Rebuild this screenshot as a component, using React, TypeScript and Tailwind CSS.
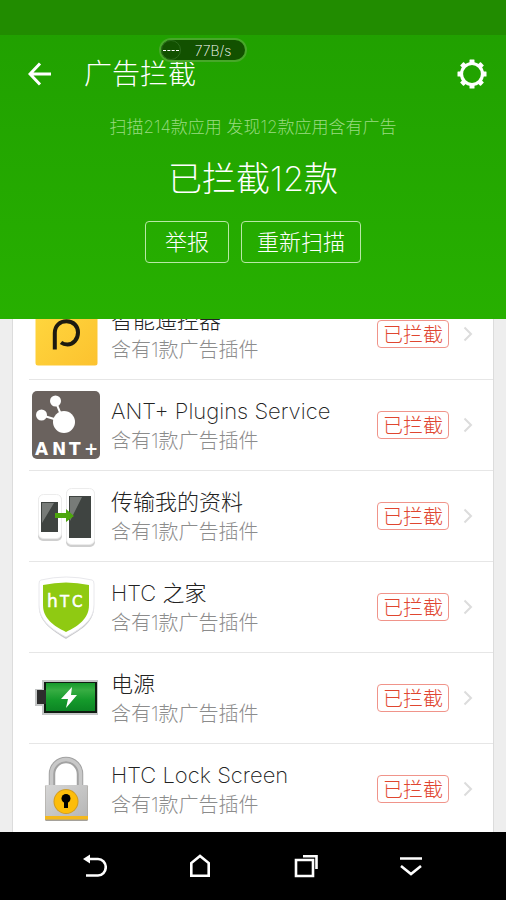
import type { ReactNode } from 'react';

function RemoteIcon() {
  return (
    <svg viewBox="0 0 68 68" className="size-17" aria-hidden="true">
      <defs>
        <linearGradient id="remote" x1="0" y1="0" x2="1" y2="1">
          <stop offset="0" stopColor="#ffd83f" />
          <stop offset="1" stopColor="#fcc22f" />
        </linearGradient>
      </defs>
      <rect x="3.500" y="3.500" width="62" height="62" rx="2.500" fill="url(#remote)" />
      <path d="M22.800 49.500V33C22.800 25.500 28 21.300 34.500 21.300C41.500 21.300 46 26 46 32.500C46 39.500 41 44.500 35.500 44.500C33 44.500 31 44 29 42.500" fill="none" stroke="#1c1a10" strokeWidth="4" />
    </svg>
  );
}

function AntIcon() {
  return (
    <svg viewBox="0 0 68 68" className="size-17" aria-hidden="true">
      <rect width="68" height="68" rx="5" fill="#6a625e" />
      <g stroke="#fff" strokeWidth="2">
        <path d="M32 31L23 9M32 31L9 24" />
      </g>
      <g fill="#fff">
        <circle cx="32" cy="31" r="11" />
        <circle cx="23.500" cy="10" r="5.500" />
        <circle cx="9.500" cy="24" r="5.500" />
      </g>
      <text y="64" fill="#fff" fontSize="17" fontWeight="700" fontFamily="DejaVu Sans, sans-serif">
        <tspan x="3">A</tspan>
        <tspan x="20">N</tspan>
        <tspan x="37">T</tspan>
        <tspan x="52">+</tspan>
      </text>
    </svg>
  );
}

function TransferIcon() {
  return (
    <svg viewBox="0 0 68 68" className="size-17" aria-hidden="true">
      <g fill="#cfcfcf">
        <rect x="6" y="14" width="24" height="45" rx="5" />
        <rect x="34" y="8" width="29" height="57" rx="5" />
      </g>
      <g fill="#fff" stroke="#ececec">
        <rect x="6.500" y="12.500" width="23" height="44" rx="5" />
        <rect x="34.500" y="6.500" width="28" height="56" rx="5" />
      </g>
      <path d="M9 20h17v30H9zM37 14h22v42H37z" fill="#3f4441" />
      <path d="M10 21h12L10 41zM38 15h12L38 39z" fill="#777b78" />
      <path d="M23 31h11v-4l8 7-8 6v-4H23z" fill="#4da60d" />
    </svg>
  );
}

function HtcHomeIcon() {
  return (
    <svg viewBox="0 0 68 68" className="size-17" aria-hidden="true">
      <path d="M9 9Q34 3 60 9Q62 9 62 13V34C62 51 46 58 34 66C21 58 7 49 7 34V13Q7 9 9 9Z" fill="#c9c9cc" />
      <path d="M9 7Q34 1 60 7Q62 7 62 11V32C62 49 46 57 34 64C21 57 7 48 7 32V11Q7 7 9 7Z" fill="#fff" stroke="#e8e8ec" />
      <path d="M11 12Q34 7 57 12V32C57 46 46 53 34 59C22 53 11 46 11 32Z" fill="#8fca12" />
      <text y="34" fill="#fff" stroke="#fff" strokeWidth="0.500" fontSize="17" fontWeight="400" fontFamily="DejaVu Sans, sans-serif">
        <tspan x="15">h</tspan>
        <tspan x="28" fontSize="15">T</tspan>
        <tspan x="40" fontSize="15">C</tspan>
      </text>
    </svg>
  );
}

function PowerIcon() {
  return (
    <svg viewBox="0 0 68 68" className="size-17" aria-hidden="true">
      <defs>
        <linearGradient id="cell" x1="0" y1="0" x2="0" y2="1">
          <stop offset="0" stopColor="#159a2b" />
          <stop offset="0.25" stopColor="#37ad43" />
          <stop offset="0.6" stopColor="#159a2b" />
          <stop offset="1" stopColor="#0c8524" />
        </linearGradient>
      </defs>
      <path d="M10 16h56v35H10v-9H3V25h7z" fill="#c4c6c6" />
      <path d="M12 18h53v31H12z" fill="#101c12" />
      <path d="M5 26h9v14H5z" fill="#2d2d2d" />
      <path d="M14 19h49v28H14z" fill="url(#cell)" />
      <path d="M40 23L29 35h7l-2 9 11-13h-6z" fill="#fff" />
    </svg>
  );
}

function LockIcon() {
  return (
    <svg viewBox="0 0 68 68" className="size-17" aria-hidden="true">
      <defs>
        <linearGradient id="steel" x1="0" y1="0" x2="1" y2="1">
          <stop offset="0" stopColor="#d6d6d6" />
          <stop offset="1" stopColor="#b5b5b5" />
        </linearGradient>
      </defs>
      <path d="M20 31V19a14 14 0 0 1 28 0v12" fill="none" stroke="#a2a2a2" strokeWidth="6.500" />
      <path d="M19.500 31V19a14.500 14.500 0 0 1 29 0v12" fill="none" stroke="#c8c8c8" strokeWidth="3.500" />
      <rect x="13" y="30" width="43" height="36" rx="1.500" fill="#a5a19a" />
      <rect x="13.500" y="30" width="42" height="34" rx="1" fill="url(#steel)" />
      <path d="M13 61h43v3.500H13z" fill="#f4b81c" />
      <circle cx="34" cy="46.500" r="12.500" fill="#d19c22" />
      <circle cx="34" cy="46.500" r="11.500" fill="#fdbd0b" />
      <circle cx="34" cy="43.500" r="4.500" />
      <path d="M32 45h4v8h-4z" />
    </svg>
  );
}

function GearIcon() {
  const teeth = [0, 45, 90, 135, 180, 225, 270, 315];
  return (
    <svg viewBox="0 0 30 30" className="size-[30px]" aria-hidden="true">
      <circle cx="15" cy="15" r="10.500" fill="none" stroke="#fff" strokeWidth="3.200" />
      {teeth.map((angle) => (
        <rect key={angle} x="12.500" y="0.500" width="5" height="4.500" rx="0.500" fill="#fff" transform={`rotate(${angle} 15 15)`} />
      ))}
    </svg>
  );
}

const apps: { name: string; icon: ReactNode }[] = [
  { name: '智能遥控器', icon: <RemoteIcon /> },
  { name: 'ANT+ Plugins Service', icon: <AntIcon /> },
  { name: '传输我的资料', icon: <TransferIcon /> },
  { name: 'HTC 之家', icon: <HtcHomeIcon /> },
  { name: '电源', icon: <PowerIcon /> },
  { name: 'HTC Lock Screen', icon: <LockIcon /> },
];

function AppRow({ name, icon }: { name: string; icon: ReactNode }) {
  return (
    <li className="ml-4 border-b border-[#e6e6e6]">
      <a href="#" className="flex h-[90px] items-center pr-5 pl-[3px]">
        {icon}
        <div className="ml-[11px] min-w-0 flex-1 pt-1 whitespace-nowrap">
          <div className="text-[22px] leading-7 text-[#222]">{name}</div>
          <div className="text-[20px] leading-8 text-[#8c8c8c]">含有1款广告插件</div>
        </div>
        <span className="flex h-7 w-[72px] items-center justify-center rounded border border-[#f0948a] pt-px text-[20px] text-[#df4630]">
          已拦截
        </span>
        <svg viewBox="0 0 10 16" className="ml-[14px] h-4 w-[10px]" fill="none" stroke="#dcdcdc" strokeWidth="2" aria-hidden="true">
          <path d="M1.500 1.500L8 8l-6.500 6.500" />
        </svg>
      </a>
    </li>
  );
}

export default function App() {
  return (
    <div className="flex h-screen flex-col overflow-hidden bg-[#eee] font-['Inter','Noto_Sans_CJK_SC',sans-serif] font-extralight">
      <header className="relative z-10 shrink-0 bg-linear-to-b from-[#209f00] to-[#27b000] pb-14 text-white">
        <div className="h-[35px] bg-[#218c00]" />
        <div className="absolute top-[38px] left-[159px] flex h-6 w-22 items-center rounded-full border-2 border-[#47a829] bg-[#125100] text-[14px]">
          <span className="flex size-5 items-center justify-center rounded-full border border-[#2b6a1c]">
            <span className="w-4 border-t border-dashed border-white" />
          </span>
          <span className="flex-1 text-center">77B/s</span>
        </div>
        <div className="flex h-[78px] items-center pr-[19px] pl-7">
          <button aria-label="返回">
            <svg viewBox="0 0 24 24" className="size-6" fill="none" stroke="#fff" strokeWidth="3" aria-hidden="true">
              <path d="M23 12H2M12 1.500L2 12l10 10.500" />
            </svg>
          </button>
          <h1 className="ml-8 flex-1 text-[28px] leading-8">广告拦截</h1>
          <button aria-label="设置">
            <GearIcon />
          </button>
        </div>
        <div className="flex flex-col items-center">
          <p className="text-[17px] leading-7 text-[#9adb82]">扫描214款应用 发现12款应用含有广告</p>
          <p className="mt-4 text-[34px] leading-11">已拦截12款</p>
          <div className="mt-5 flex gap-3 text-[22px]">
            <button className="h-[42px] w-[84px] rounded border border-[#b8e8a6]">举报</button>
            <button className="h-[42px] w-[120px] rounded border border-[#b8e8a6]">重新扫描</button>
          </div>
        </div>
      </header>

      <main className="min-h-0 flex-1 overflow-hidden px-3">
        <ul className="-mt-[30px] border-x border-[#dcdcdc] bg-white">
          {apps.map((app) => (
            <AppRow key={app.name} {...app} />
          ))}
        </ul>
      </main>

      <nav className="relative z-10 flex h-[68px] shrink-0 items-center justify-around bg-black px-[42px]">
        <button aria-label="后退">
          <svg viewBox="0 0 24 24" className="size-6" aria-hidden="true">
            <path d="M7 5h8a7.500 8 0 0 1 0 16.500H3" fill="none" stroke="#fff" strokeWidth="2.600" />
            <path d="M0 5L7 0.500v9z" fill="#fff" />
          </svg>
        </button>
        <button aria-label="主页">
          <svg viewBox="0 0 24 24" className="size-6" fill="none" stroke="#fff" strokeWidth="2.600" aria-hidden="true">
            <path d="M3.300 21.700V9L12 2l8.700 7v12.700z" />
          </svg>
        </button>
        <button aria-label="最近任务">
          <svg viewBox="0 0 24 24" className="size-6" fill="none" stroke="#fff" strokeWidth="2.600" aria-hidden="true">
            <path d="M2 6h17v16H2zM9 2.200h13.500V15" />
          </svg>
        </button>
        <button aria-label="收起">
          <svg viewBox="0 0 24 24" className="size-6" fill="none" stroke="#fff" strokeWidth="2.600" aria-hidden="true">
            <path d="M1 4.500h22M2 12l10 8 10-8" />
          </svg>
        </button>
      </nav>
    </div>
  );
}
